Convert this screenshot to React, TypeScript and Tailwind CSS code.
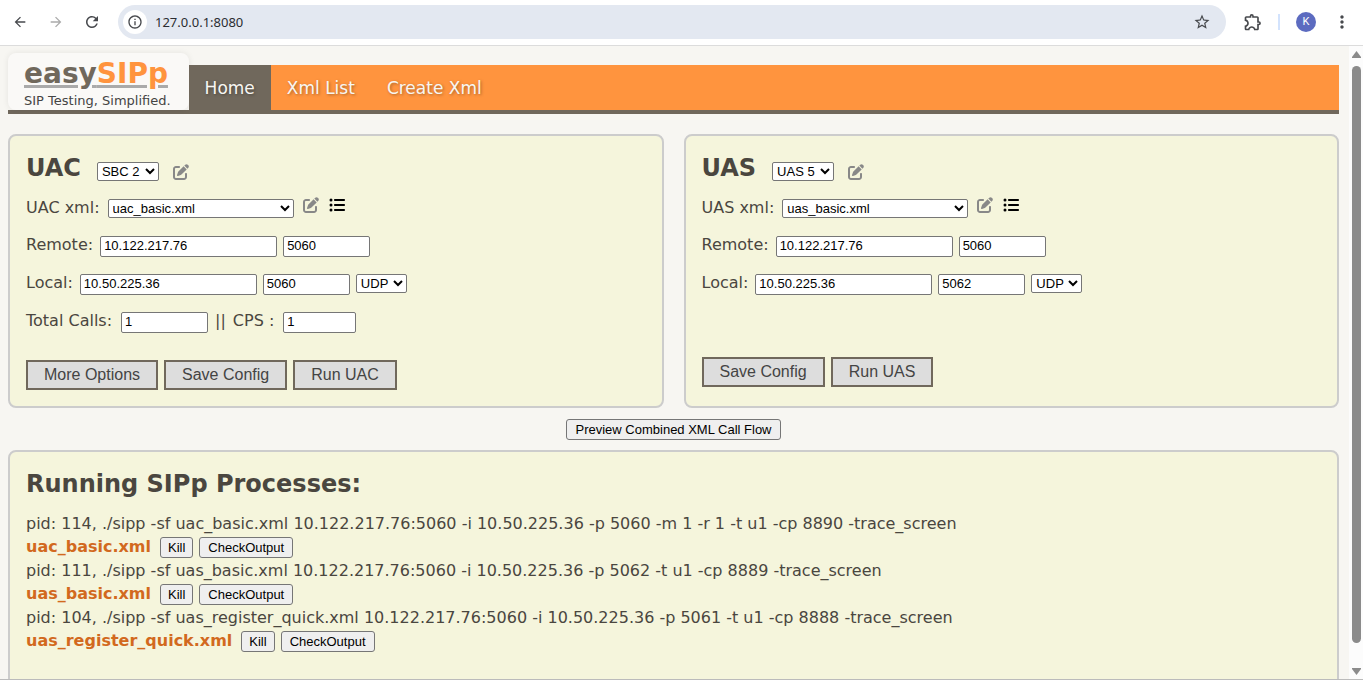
import type { ReactNode } from "react";
import { FaPenToSquare, FaListUl } from "react-icons/fa6";
import {
  MdArrowBack,
  MdArrowForward,
  MdRefresh,
  MdInfoOutline,
  MdStarBorder,
  MdMoreVert,
  MdOutlineExtension,
} from "react-icons/md";

const control =
  "border border-[#767676] rounded-[2px] bg-white text-black text-[13px] font-['Liberation_Sans',Arial,sans-serif]";
const smallButton =
  "h-[21px] shrink-0 whitespace-nowrap border border-[#767676] rounded-[3px] bg-[#efefef] text-black text-[13px] leading-[19px] font-['Liberation_Sans',Arial,sans-serif]";

function BrowserBar() {
  return (
    <div className="flex h-[46px] shrink-0 items-center border-b border-[#dcdcdc] bg-white pr-[11px] pb-px pl-3 text-[#47494d]">
      <button aria-label="Back" className="mr-5 text-[16px]">
        <MdArrowBack />
      </button>
      <button aria-label="Forward" className="mr-[19px] text-[16px] text-[#ababab]">
        <MdArrowForward />
      </button>
      <button aria-label="Reload" className="mr-[17px] text-[18px]">
        <MdRefresh />
      </button>
      <div className="flex h-[34px] flex-1 items-center rounded-full bg-[#e3e8f1] pr-[15px] pl-[5px]">
        <button
          aria-label="Site information"
          className="flex size-6 items-center justify-center rounded-full bg-white text-[16px]"
        >
          <MdInfoOutline />
        </button>
        <input
          aria-label="Address"
          defaultValue="127.0.0.1:8080"
          className="ml-2 min-w-0 flex-1 bg-transparent font-['Noto_Sans',sans-serif] text-[13px] text-[#2b2d31] outline-none"
        />
        <button aria-label="Bookmark" className="text-[18px]">
          <MdStarBorder />
        </button>
      </div>
      <button aria-label="Extensions" className="ml-[17px] text-[20px]">
        <MdOutlineExtension />
      </button>
      <span className="ml-[15px] h-4 w-[2px] bg-[#d3e3fd]" />
      <button
        aria-label="Profile"
        className="ml-4 flex size-5 items-center justify-center rounded-full bg-[#5c6bc0] font-['Roboto',sans-serif] text-[11px] text-white"
      >
        K
      </button>
      <button aria-label="Menu" className="ml-4 text-[20px]">
        <MdMoreVert />
      </button>
    </div>
  );
}

function Header() {
  return (
    <header className="flex items-end border-b-4 border-[#70685c]">
      <div className="h-[57px] rounded-lg bg-[#faf9f7] pt-1 pr-[18px] pl-4 shadow-[0_0_6px_rgba(0,0,0,0.08)]">
        <a
          href="#home"
          className="block text-[28px] leading-[34px] font-bold text-[#70685c] underline decoration-[#aaaaaa] decoration-3"
        >
          easy<span className="text-[#ff943e]">SIPp</span>
        </a>
        <p className="text-[13px] leading-5 whitespace-nowrap text-[#444444]">SIP Testing, Simplified.</p>
      </div>
      <nav className="flex h-[45px] flex-1 items-stretch bg-[#ff943e] text-[17px] leading-[47px] text-[#f7f6f2] [text-shadow:1px_1px_3px_rgba(0,0,0,0.35)]">
        <a href="#home" className="h-[45px] bg-[#70685c] px-4">
          Home
        </a>
        <a href="#xml-list" className="px-4">
          Xml List
        </a>
        <a href="#create-xml" className="px-4">
          Create Xml
        </a>
      </nav>
    </header>
  );
}

function BigButton({ children }: { children: ReactNode }) {
  return (
    <button className="h-[30px] border-2 border-[#70685c] bg-[#dddddd] px-4 font-['Liberation_Sans',Arial,sans-serif] text-[16px] leading-[26px] text-[#444444]">
      {children}
    </button>
  );
}

type AgentProps = {
  name: string;
  profile: string;
  xml: string;
  localPort: string;
  children: ReactNode;
};

function AgentCard({ name, profile, xml, localPort, children }: AgentProps) {
  const id = name.toLowerCase();
  return (
    <section className="flex-1 rounded-lg border-2 border-[#cccccc] bg-[#f5f5dc] p-4">
      <div className="flex h-10 items-baseline">
        <h2 className="text-[24px] leading-8 font-bold">{name}</h2>
        <select aria-label={name + " profile"} className={control + " ml-4 h-[19px] w-[62px]"}>
          <option>{profile}</option>
        </select>
        <button aria-label="Edit profile" className="mt-3 ml-[14px] self-start text-[16px] text-[#888888]">
          <FaPenToSquare />
        </button>
      </div>
      <div className="flex h-[37px] items-baseline gap-[6px] pt-1">
        <label htmlFor={id + "-xml"} className="pr-[2px]">
          {name} xml:
        </label>
        <select id={id + "-xml"} className={control + " h-[19px] w-[186px]"}>
          <option>{xml}</option>
        </select>
        <button aria-label="Edit xml" className="ml-[3px] text-[16px] text-[#888888]">
          <FaPenToSquare />
        </button>
        <button aria-label="Show call flow" className="ml-1 text-[16px] text-black">
          <FaListUl />
        </button>
      </div>
      <div className="flex h-[38px] items-baseline gap-[6px] pt-1">
        <label htmlFor={id + "-remote"} className="pr-px">
          Remote:
        </label>
        <input id={id + "-remote"} defaultValue="10.122.217.76" className={control + " h-[21px] w-[177px] px-[3px]"} />
        <input aria-label="Remote port" defaultValue="5060" className={control + " h-[21px] w-[87px] px-[3px]"} />
      </div>
      <div className="flex h-[38px] items-baseline gap-[6px] pt-1">
        <label htmlFor={id + "-local"} className="pr-px">
          Local:
        </label>
        <input id={id + "-local"} defaultValue="10.50.225.36" className={control + " h-[21px] w-[177px] px-[3px]"} />
        <input aria-label="Local port" defaultValue={localPort} className={control + " h-[21px] w-[87px] px-[3px]"} />
        <select aria-label="Transport" className={control + " h-[19px] w-[51px]"}>
          <option>UDP</option>
        </select>
      </div>
      {children}
    </section>
  );
}

const processes = [
  {
    text: "pid: 114, ./sipp -sf uac_basic.xml 10.122.217.76:5060 -i 10.50.225.36 -p 5060 -m 1 -r 1 -t u1 -cp 8890 -trace_screen",
    file: "uac_basic.xml",
  },
  {
    text: "pid: 111, ./sipp -sf uas_basic.xml 10.122.217.76:5060 -i 10.50.225.36 -p 5062 -t u1 -cp 8889 -trace_screen",
    file: "uas_basic.xml",
  },
  {
    text: "pid: 104, ./sipp -sf uas_register_quick.xml 10.122.217.76:5060 -i 10.50.225.36 -p 5061 -t u1 -cp 8888 -trace_screen",
    file: "uas_register_quick.xml",
  },
];

function Scrollbar() {
  return (
    <div className="flex w-[14px] shrink-0 flex-col items-center bg-[#fcfcfc] pt-[5px] pb-1 text-[#8b8b8b]">
      <svg width="9" height="7" viewBox="0 0 9 7" fill="currentColor">
        <path d="M4.5 0 9 6v1H0V6z" />
      </svg>
      <div className="mt-2 mb-[25px] w-[9px] flex-1 rounded-full bg-[#8b8b8b]" />
      <svg width="9" height="7" viewBox="0 0 9 7" fill="currentColor">
        <path d="M4.5 7 9 1V0H0v1z" />
      </svg>
    </div>
  );
}

export default function App() {
  return (
    <div className="flex h-screen flex-col overflow-hidden bg-white font-['DejaVu_Sans',Verdana,sans-serif] text-[16px] leading-6 text-[#4a463f]">
      <BrowserBar />
      <div className="mb-px flex min-h-0 flex-1 border-b border-[#bbbbbb]">
        <main className="min-w-0 flex-1 overflow-hidden bg-[#f7f6f2] pt-[7px] pr-[10px] pl-2">
          <Header />
          <div className="mt-5 flex gap-5">
            <AgentCard name="UAC" profile="SBC 2" xml="uac_basic.xml" localPort="5060">
              <div className="flex h-[38px] items-baseline gap-[6px] pt-1">
                <label htmlFor="total-calls" className="pr-[3px]">
                  Total Calls:
                </label>
                <input id="total-calls" defaultValue="1" className={control + " h-[21px] w-[87px] px-[3px]"} />
                <span className="px-px">||</span>
                <label htmlFor="cps" className="pr-[3px]">
                  CPS :
                </label>
                <input id="cps" defaultValue="1" className={control + " h-[21px] w-[73px] px-[3px]"} />
              </div>
              <div className="mt-[17px] flex gap-[6px]">
                <BigButton>More Options</BigButton>
                <BigButton>Save Config</BigButton>
                <BigButton>Run UAC</BigButton>
              </div>
            </AgentCard>
            <AgentCard name="UAS" profile="UAS 5" xml="uas_basic.xml" localPort="5062">
              <div className="mt-[52px] flex gap-[6px]">
                <BigButton>Save Config</BigButton>
                <BigButton>Run UAS</BigButton>
              </div>
            </AgentCard>
          </div>
          <div className="mt-[11px] flex justify-center">
            <button className={smallButton + " px-2"}>Preview Combined XML Call Flow</button>
          </div>
          <section className="mt-[10px] rounded-lg border-2 border-[#cccccc] bg-[#f5f5dc] p-4 pb-24">
            <h2 className="mb-3 text-[24px] leading-8 font-bold">Running SIPp Processes:</h2>
            <ul>
              {processes.map((p) => (
                <li key={p.file}>
                  <p className="leading-6">{p.text}</p>
                  <div className="flex h-[23px] items-baseline gap-[6px] leading-[21px]">
                    <strong className="pr-[3px] text-[#d2691e]">{p.file}</strong>
                    <button className={smallButton + " px-[7px]"}>Kill</button>
                    <button className={smallButton + " px-2"}>CheckOutput</button>
                  </div>
                </li>
              ))}
            </ul>
          </section>
        </main>
        <Scrollbar />
      </div>
    </div>
  );
}
